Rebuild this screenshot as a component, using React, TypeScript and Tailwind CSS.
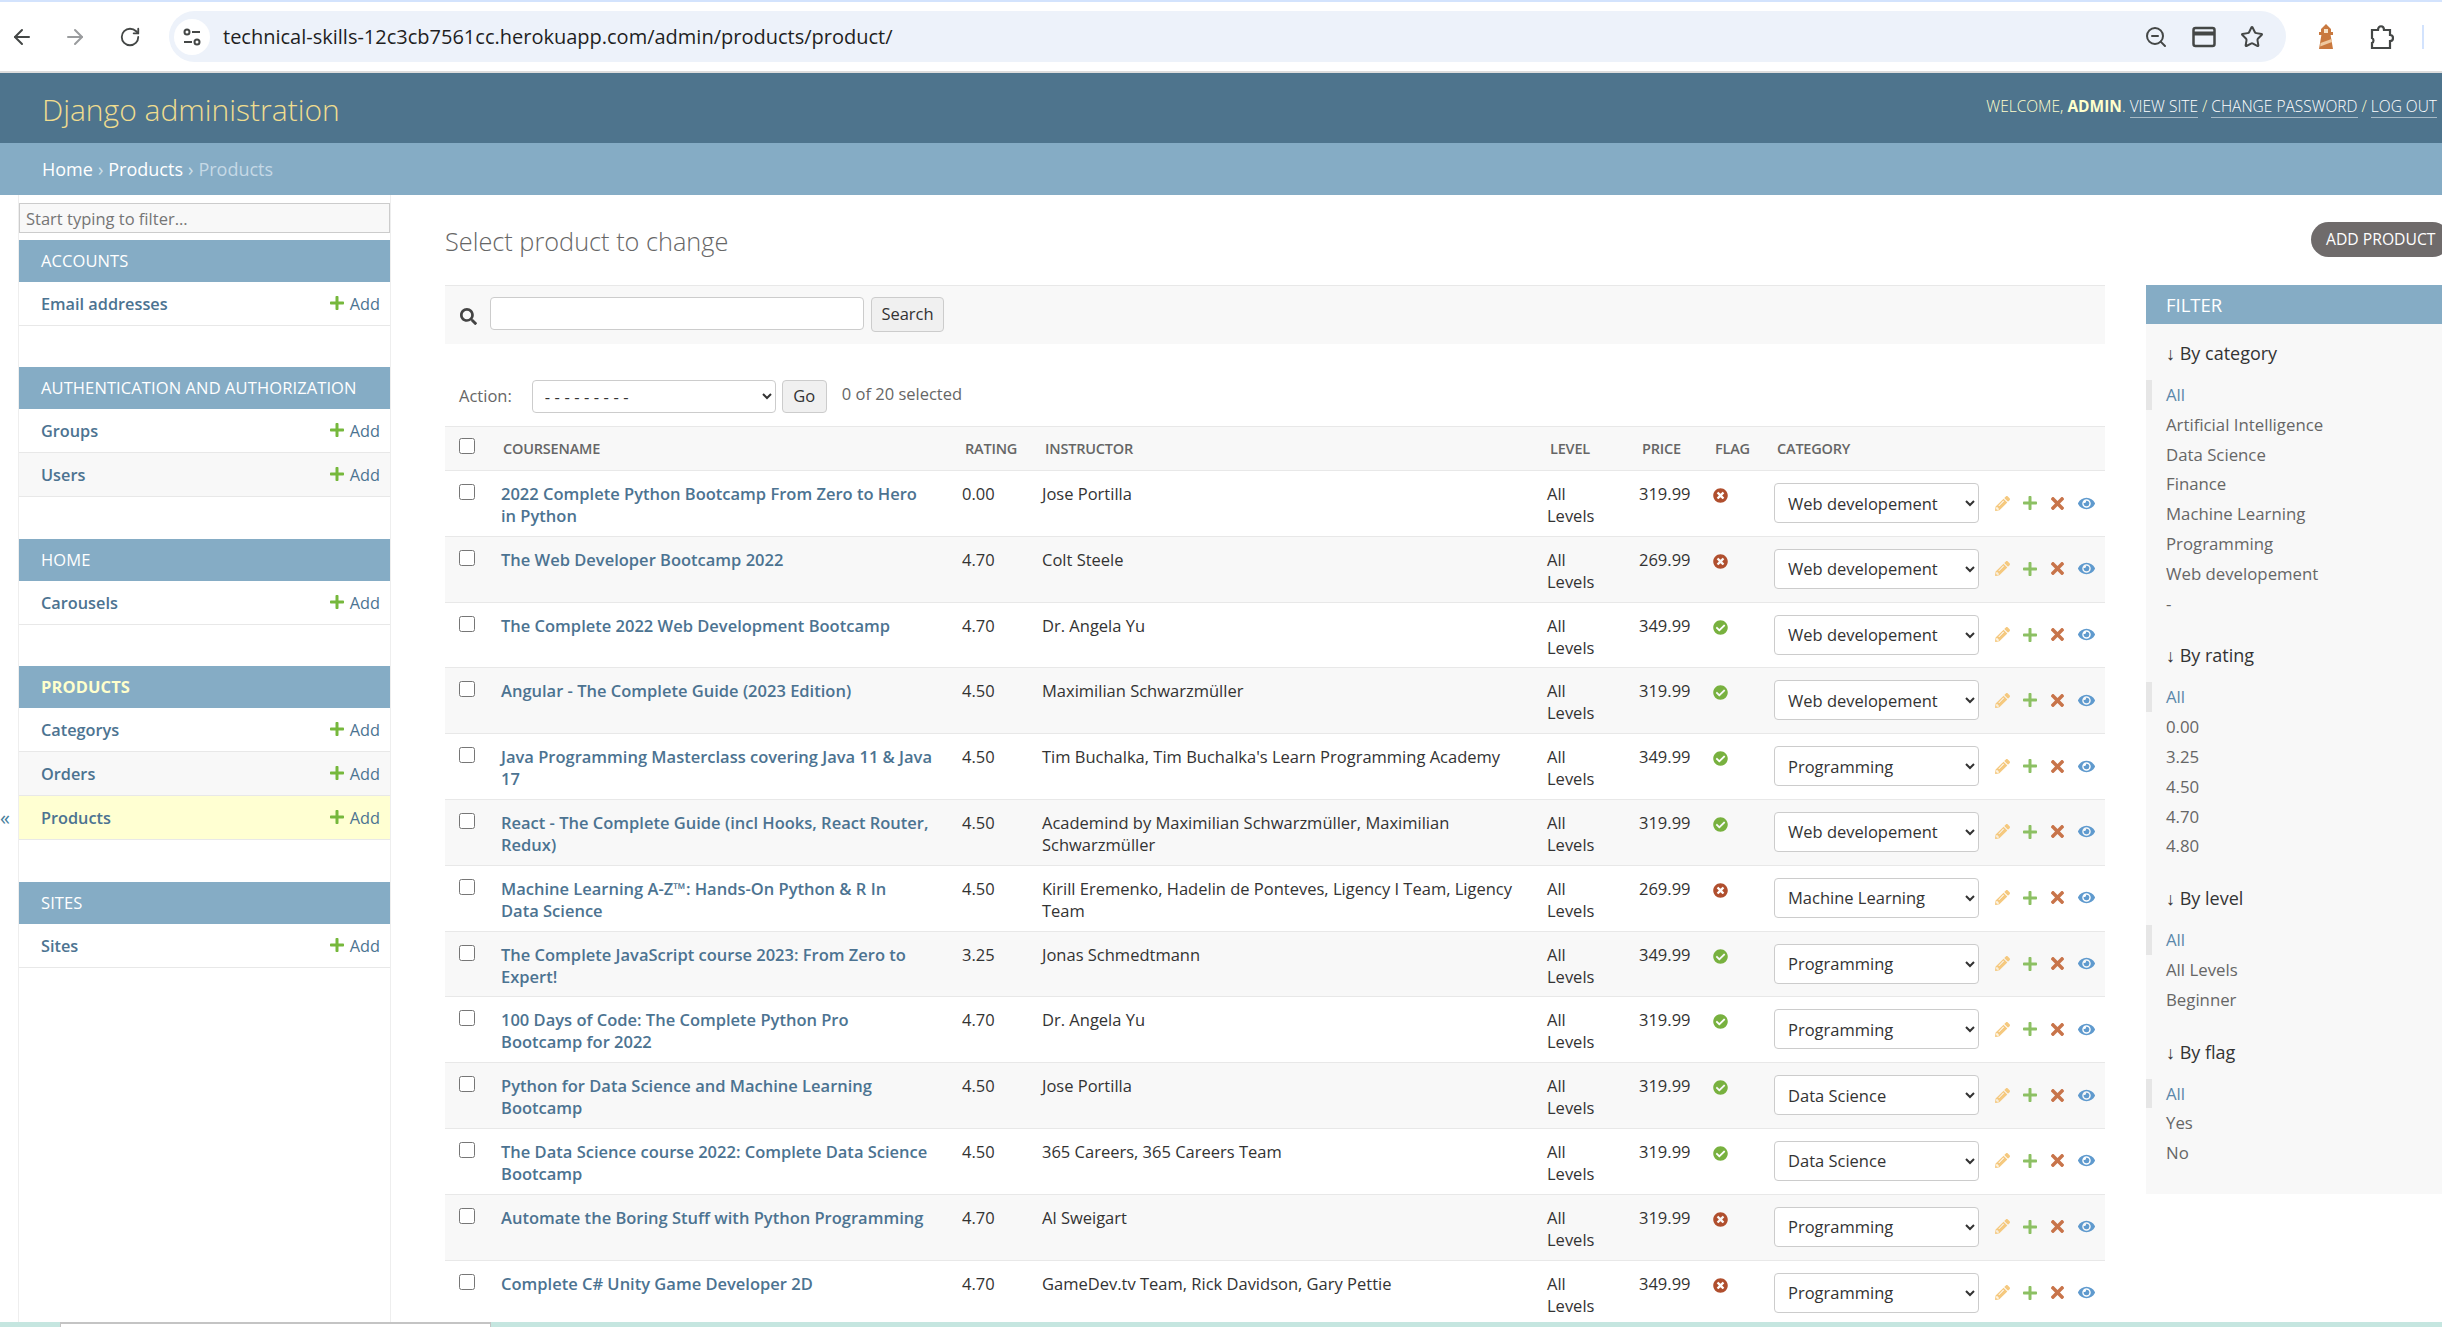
import { ArrowLeft, ArrowRight, RotateCw, Star, ZoomOut } from "lucide-react";
import {
  FaCheckCircle,
  FaEye,
  FaPencilAlt,
  FaPlus,
  FaSearch,
  FaTimes,
  FaTimesCircle,
} from "react-icons/fa";

type Course = {
  name: string;
  rating: string;
  instructor: string;
  price: string;
  ok: boolean;
  category: string;
};

const courses: Course[] = [
  { name: "2022 Complete Python Bootcamp From Zero to Hero in Python", rating: "0.00", instructor: "Jose Portilla", price: "319.99", ok: false, category: "Web developement" },
  { name: "The Web Developer Bootcamp 2022", rating: "4.70", instructor: "Colt Steele", price: "269.99", ok: false, category: "Web developement" },
  { name: "The Complete 2022 Web Development Bootcamp", rating: "4.70", instructor: "Dr. Angela Yu", price: "349.99", ok: true, category: "Web developement" },
  { name: "Angular - The Complete Guide (2023 Edition)", rating: "4.50", instructor: "Maximilian Schwarzmüller", price: "319.99", ok: true, category: "Web developement" },
  { name: "Java Programming Masterclass covering Java 11 & Java 17", rating: "4.50", instructor: "Tim Buchalka, Tim Buchalka's Learn Programming Academy", price: "349.99", ok: true, category: "Programming" },
  { name: "React - The Complete Guide (incl Hooks, React Router, Redux)", rating: "4.50", instructor: "Academind by Maximilian Schwarzmüller, Maximilian Schwarzmüller", price: "319.99", ok: true, category: "Web developement" },
  { name: "Machine Learning A-Z™: Hands-On Python & R In\nData Science", rating: "4.50", instructor: "Kirill Eremenko, Hadelin de Ponteves, Ligency I Team, Ligency Team", price: "269.99", ok: false, category: "Machine Learning" },
  { name: "The Complete JavaScript course 2023: From Zero to Expert!", rating: "3.25", instructor: "Jonas Schmedtmann", price: "349.99", ok: true, category: "Programming" },
  { name: "100 Days of Code: The Complete Python Pro\nBootcamp for 2022", rating: "4.70", instructor: "Dr. Angela Yu", price: "319.99", ok: true, category: "Programming" },
  { name: "Python for Data Science and Machine Learning Bootcamp", rating: "4.50", instructor: "Jose Portilla", price: "319.99", ok: true, category: "Data Science" },
  { name: "The Data Science course 2022: Complete Data Science Bootcamp", rating: "4.50", instructor: "365 Careers, 365 Careers Team", price: "319.99", ok: true, category: "Data Science" },
  { name: "Automate the Boring Stuff with Python Programming", rating: "4.70", instructor: "Al Sweigart", price: "319.99", ok: false, category: "Programming" },
  { name: "Complete C# Unity Game Developer 2D", rating: "4.70", instructor: "GameDev.tv Team, Rick Davidson, Gary Pettie", price: "349.99", ok: false, category: "Programming" },
];

const categories = ["Artificial Intelligence", "Data Science", "Finance", "Machine Learning", "Programming", "Web developement"];

const sections = [
  { title: "Accounts", rows: ["Email addresses"], gap: "mb-[41px]" },
  { title: "Authentication and Authorization", rows: ["Groups", "Users"], gap: "mb-[42px]" },
  { title: "Home", rows: ["Carousels"], gap: "mb-[41px]" },
  { title: "Products", rows: ["Categorys", "Orders", "Products"], gap: "mb-[42px]", active: true },
  { title: "Sites", rows: ["Sites"], gap: "" },
];

const filters = [
  { title: "By category", items: ["All", ...categories, "-"] },
  { title: "By rating", items: ["All", "0.00", "3.25", "4.50", "4.70", "4.80"] },
  { title: "By level", items: ["All", "All Levels", "Beginner"] },
  { title: "By flag", items: ["All", "Yes", "No"] },
];

const Lighthouse = () => (
  <svg width="20" height="26" viewBox="0 0 20 26">
    <path d="M10 0l5 5v3h2v3h-2.4L17 25H3l2.4-14H3V8h2V5z" fill="#c9793f" />
    <rect x="8" y="5" width="4" height="4" fill="#f7e3c8" />
    <path d="M4.5 19l11-4 .5 3-11.800 4.500z" fill="#efc9a0" />
  </svg>
);

const BrowserBar = () => (
  <div className="flex h-[73px] items-center border-t-2 border-b-2 border-t-[#d3e3fd] border-b-[#dddddd] bg-white pl-[10px]">
    <ArrowLeft size={24} className="text-[#444746]" />
    <ArrowRight size={24} className="ml-[29px] text-[#9a9c9e]" />
    <RotateCw size={22} className="ml-[32px] text-[#444746]" />
    <div className="ml-[28px] flex h-[51px] w-[2117px] items-center rounded-full bg-[#edf2fa] pl-[5px] pr-[22px]">
      <div className="flex h-[36px] w-[36px] items-center justify-center rounded-full bg-white">
        <svg width="20" height="20" viewBox="0 0 20 20" fill="none" stroke="#444746" strokeWidth="2">
          <circle cx="5" cy="5" r="2.500" />
          <path d="M10 5h8M2 15h8" />
          <circle cx="15" cy="15" r="2.500" />
        </svg>
      </div>
      <span className="ml-[13px] text-[20px] text-[#1f1f1f]">
        technical-skills-12c3cb7561cc.herokuapp.com/admin/products/product/
      </span>
      <ZoomOut size={24} className="ml-auto text-[#444746]" />
      <svg width="24" height="22" viewBox="0 0 24 22" className="ml-[24px]" fill="none" stroke="#444746" strokeWidth="2.500">
        <rect x="1.500" y="2" width="21" height="18" rx="2" />
        <path d="M1.500 7.500h21" strokeWidth="4" />
      </svg>
      <Star size={24} className="ml-[24px] text-[#444746]" />
    </div>
    <div className="ml-[30px]">
      <Lighthouse />
    </div>
    <svg width="24" height="26" viewBox="0 0 24 26" className="ml-[34px]" fill="none" stroke="#444746" strokeWidth="2.200">
      <path d="M2 6h6c0-5 6-5 6 0h6v5c4 0 4 6 0 6v7H2v-5c2-1 2-4 0-5z" />
    </svg>
    <div className="ml-[28px] h-[24px] w-[2px] bg-[#d3e3fd]" />
  </div>
);

const Header = () => (
  <>
    <div className="flex h-[70px] items-center justify-between bg-[#4e748d] pl-[42px] pr-[5px]">
      <span className="mt-[2px] text-[30px] font-light text-[#f0dd8f]">Django administration</span>
      <div className="-mt-[3px] text-[15.500px] font-light uppercase text-[#ffffcc]">
        Welcome, <strong className="font-bold">admin</strong>.{" "}
        <a className="border-b border-[#ffffff80] text-white">View site</a> /{" "}
        <a className="border-b border-[#ffffff80] text-white">Change password</a> /{" "}
        <a className="border-b border-[#ffffff80] text-white">Log out</a>
      </div>
    </div>
    <div className="flex h-[52px] items-center bg-[#85acc5] pl-[42px] pt-[1px] text-[18px] text-white">
      Home <span className="mx-[5px] text-[#cfe0ea]">›</span> Products
      <span className="mx-[5px] text-[#cfe0ea]">›</span>
      <span className="text-[#c5d9e6]">Products</span>
    </div>
  </>
);

const Sidebar = () => (
  <aside className="ml-[18px] h-[1127px] w-[373px] shrink-0 border-x border-[#eeeeee] pt-[8px]">
    <input
      placeholder="Start typing to filter..."
      className="block h-[30px] w-full border border-[#cccccc] bg-[#f8f8f8] px-[6px] text-[16.500px] placeholder:text-[#757575]"
    />
    <div className="mt-[7px]">
      {sections.map((s) => (
        <div key={s.title} className={s.gap}>
          <div
            className={`flex h-[42px] items-center bg-[#85acc5] pl-[22px] pt-[1px] text-[16.500px] uppercase tracking-[0.1px] ${
              s.active ? "font-bold text-[#ffffcc]" : "text-white"
            }`}
          >
            {s.title}
          </div>
          {s.rows.map((r, i) => (
            <div
              key={r}
              className={`flex h-[44px] items-center border-b border-[#e8e8e8] pl-[22px] pr-[10px] pt-[2px] text-[16.300px] text-[#4c7391] ${
                s.active && r === "Products" ? "bg-[#ffffd2]" : i % 2 ? "bg-[#f8f8f8]" : "bg-white"
              }`}
            >
              <span className="font-semibold">{r}</span>
              <span className="ml-auto flex items-center gap-[5px]">
                <FaPlus size={16} className="-mt-[3px] text-[#76b83c]" /> Add
              </span>
            </div>
          ))}
        </div>
      ))}
    </div>
  </aside>
);

const CourseRow = ({ course, index }: { course: Course; index: number }) => (
  <tr className={`h-[65.8px] border-b border-[#e8e8e8] align-top ${index % 2 ? "bg-[#f8f8f8]" : "bg-white"}`}>
    <td className="pl-[14px] pt-[13px]">
      <input type="checkbox" className="block h-[16px] w-[16px]" />
    </td>
    <td className="whitespace-pre-line pl-[6px] pr-[20px] pt-[12px] font-semibold text-[#4c7391]">{course.name}</td>
    <td className="pl-[7px] pt-[12px]">{course.rating}</td>
    <td className="pl-[6px] pr-[20px] pt-[12px]">{course.instructor}</td>
    <td className="pl-[6px] pt-[12px]">
      <span className="block w-min">All Levels</span>
    </td>
    <td className="pl-[6px] pt-[12px]">{course.price}</td>
    <td className="pl-[7px] pt-[17px]">
      {course.ok ? <FaCheckCircle size={15} className="text-[#78b13f]" /> : <FaTimesCircle size={15} className="text-[#b04f2e]" />}
    </td>
    <td className="pl-[4px] pt-[12px]">
      <div className="flex items-center">
        <select
          defaultValue={course.category}
          className="h-[40px] w-[205px] rounded-[4px] border border-[#cccccc] bg-white px-[9px] text-[#333333]"
        >
          {categories.map((c) => (
            <option key={c}>{c}</option>
          ))}
        </select>
        <FaPencilAlt size={15} className="ml-[16px] text-[#f5c97f]" />
        <FaPlus size={16} className="ml-[12px] text-[#8cc063]" />
        <FaTimes size={19} className="ml-[10px] text-[#c8744a]" />
        <FaEye size={17} className="ml-[11px] text-[#5f9ace]" />
      </div>
    </td>
  </tr>
);

const CourseTable = () => (
  <table className="w-full table-fixed border-collapse text-[16.500px] leading-[22px] text-[#333333]">
    <thead>
      <tr className="h-[44px] border-y border-[#e8e8e8] bg-[#f8f8f8] text-left text-[14.500px] uppercase tracking-[-0.2px] text-[#666666]">
        <th className="w-[50px] pl-[14px]">
          <input type="checkbox" className="-mt-[6px] block h-[16px] w-[16px]" />
        </th>
        <th className="w-[460px] pl-[8px] font-semibold">Coursename</th>
        <th className="w-[81px] pl-[10px] font-semibold">Rating</th>
        <th className="w-[505px] pl-[9px] font-semibold">Instructor</th>
        <th className="w-[92px] pl-[9px] font-semibold">Level</th>
        <th className="w-[73px] pl-[9px] font-semibold">Price</th>
        <th className="w-[64px] pl-[9px] font-semibold">Flag</th>
        <th className="pl-[7px] font-semibold">Category</th>
      </tr>
    </thead>
    <tbody>
      {courses.map((c, i) => (
        <CourseRow key={c.name} course={c} index={i} />
      ))}
    </tbody>
  </table>
);

const FilterPanel = () => (
  <aside className="h-[909px] flex-1 bg-[#f8f8f8]">
    <div className="flex h-[39px] items-center bg-[#85acc5] pl-[20px] text-[18.500px] uppercase text-white">Filter</div>
    <div className="pt-[14px]">
      {filters.map((f) => (
        <div key={f.title} className="mb-[22px]">
          <h3 className="mb-[12px] h-[30px] pl-[20px] text-[18px] leading-[30px] text-[#333333]">↓ {f.title}</h3>
          <ul>
            {f.items.map((item, i) => (
              <li
                key={item}
                className={`h-[29.800px] text-[16.800px] leading-[30px] ${
                  i === 0 ? "border-l-[6px] border-[#e6e6e6] pl-[14px] text-[#5b87aa]" : "pl-[20px] text-[#666666]"
                }`}
              >
                {item}
              </li>
            ))}
          </ul>
        </div>
      ))}
    </div>
  </aside>
);

const Content = () => (
  <main className="min-w-0 flex-1 pl-[54px]">
    <div className="flex h-[90px] justify-between">
      <h1 className="mt-[26px] text-[25.300px] font-light leading-[40px] text-[#666666]">Select product to change</h1>
      <a className="-mr-[8px] mt-[27px] flex h-[35px] w-[139px] items-center rounded-full bg-[#6f6b6b] pl-[15px] text-[15.700px] uppercase text-white">
        Add product
      </a>
    </div>
    <div className="flex gap-[41px]">
      <div className="w-[1660px] shrink-0">
        <div className="flex h-[59px] items-start border-t border-[#e8e8e8] bg-[#f8f8f8] pl-[15px] pt-[11px]">
          <FaSearch size={17} className="mt-[11px] text-[#444444]" />
          <input className="ml-[13px] h-[33px] w-[374px] rounded-[4px] border border-[#cccccc] bg-white" />
          <button className="ml-[7px] h-[35px] w-[73px] rounded-[4px] border border-[#cccccc] bg-[#f0f0f0] text-[16.500px] text-[#333333]">
            Search
          </button>
        </div>
        <div className="flex h-[82px] items-start pl-[14px] pt-[36px] text-[16.500px] text-[#666666]">
          <span className="mt-[4px]">Action:</span>
          <select className="ml-[20px] h-[33px] w-[244px] rounded-[4px] border border-[#cccccc] bg-white px-[8px] tracking-[4.500px] text-[#333333]">
            <option>---------</option>
          </select>
          <button className="ml-[6px] h-[33px] w-[45px] rounded-[4px] border border-[#cccccc] bg-[#f0f0f0] text-[#333333]">Go</button>
          <span className="ml-[15px] mt-[2px]">0 of 20 selected</span>
        </div>
        <CourseTable />
      </div>
      <FilterPanel />
    </div>
  </main>
);

export default function App() {
  return (
    <div className="relative h-[1327px] w-[2442px] overflow-hidden bg-white font-['Open_Sans',sans-serif]">
      <BrowserBar />
      <Header />
      <div className="flex">
        <Sidebar />
        <Content />
      </div>
      <span className="absolute left-0 top-[808px] text-[20px] leading-none text-[#447e9b]">«</span>
      <div className="absolute bottom-0 left-0 flex h-[5px] w-full bg-[#c5e6e0] pl-[60px]">
        <div className="h-[5px] w-[431px] border-t-[2px] border-x border-[#c4c4c4] bg-white" />
      </div>
    </div>
  );
}
